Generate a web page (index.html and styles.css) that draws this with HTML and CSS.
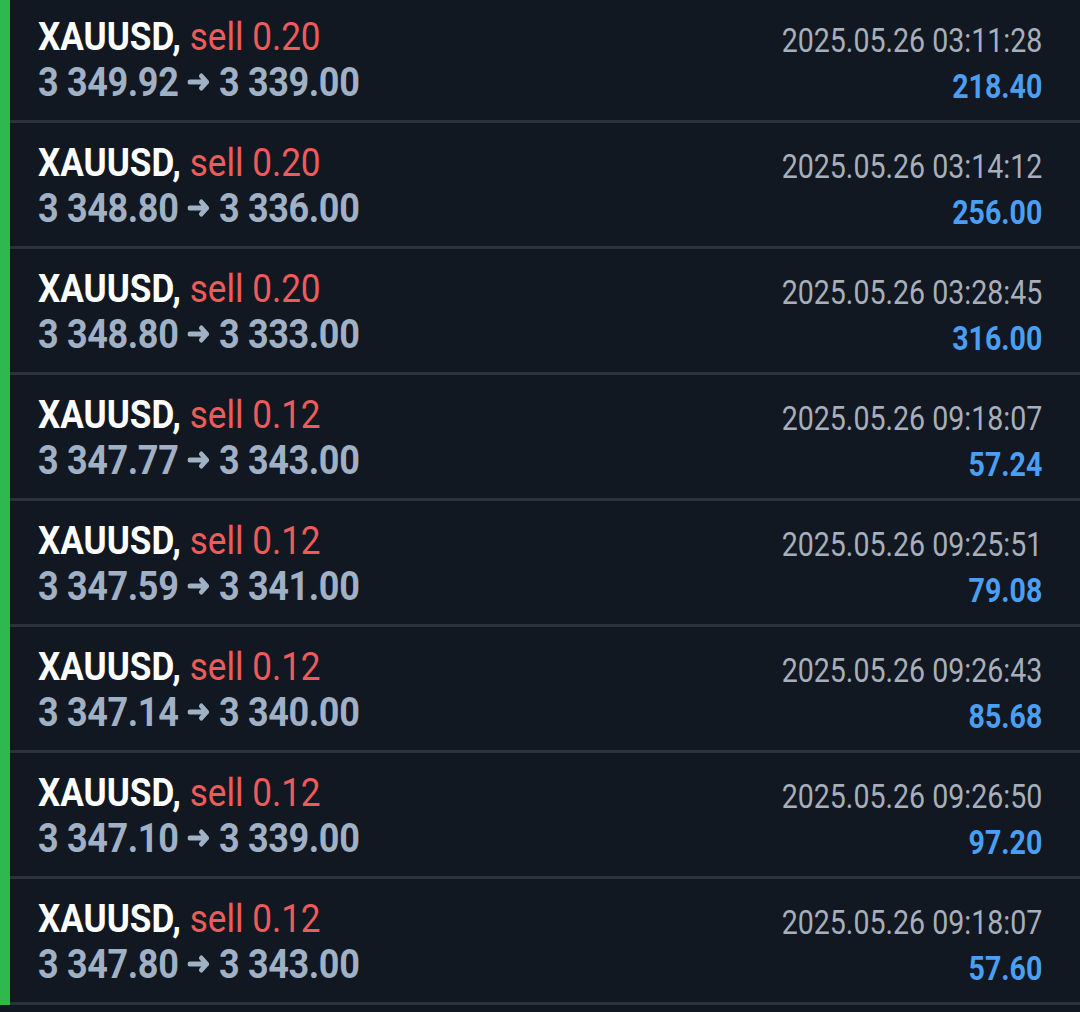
FILE: index.html
```html
<!DOCTYPE html>
<html lang="en">
<head>
  <meta charset="UTF-8">
  <meta name="viewport" content="width=device-width, initial-scale=1.0">
  <title>Trade History</title>
  <link rel="stylesheet" href="styles.css">
</head>
<body>

  <div class="history">

    <div class="deal">
      <div class="deal-left">
        <div class="deal-title"><b>XAUUSD,</b> <span class="sell">sell 0.20</span></div>
        <div class="deal-price">3 349.92 <svg class="arrow" viewBox="0 0 26 18"><path d="M2.5 9h19M15.5 3l6 6-6 6"/></svg> 3 339.00</div>
      </div>
      <div class="deal-right">
        <div class="deal-time">2025.05.26 03:11:28</div>
        <div class="deal-profit">218.40</div>
      </div>
    </div>

    <div class="deal">
      <div class="deal-left">
        <div class="deal-title"><b>XAUUSD,</b> <span class="sell">sell 0.20</span></div>
        <div class="deal-price">3 348.80 <svg class="arrow" viewBox="0 0 26 18"><path d="M2.5 9h19M15.5 3l6 6-6 6"/></svg> 3 336.00</div>
      </div>
      <div class="deal-right">
        <div class="deal-time">2025.05.26 03:14:12</div>
        <div class="deal-profit">256.00</div>
      </div>
    </div>

    <div class="deal">
      <div class="deal-left">
        <div class="deal-title"><b>XAUUSD,</b> <span class="sell">sell 0.20</span></div>
        <div class="deal-price">3 348.80 <svg class="arrow" viewBox="0 0 26 18"><path d="M2.5 9h19M15.5 3l6 6-6 6"/></svg> 3 333.00</div>
      </div>
      <div class="deal-right">
        <div class="deal-time">2025.05.26 03:28:45</div>
        <div class="deal-profit">316.00</div>
      </div>
    </div>

    <div class="deal">
      <div class="deal-left">
        <div class="deal-title"><b>XAUUSD,</b> <span class="sell">sell 0.12</span></div>
        <div class="deal-price">3 347.77 <svg class="arrow" viewBox="0 0 26 18"><path d="M2.5 9h19M15.5 3l6 6-6 6"/></svg> 3 343.00</div>
      </div>
      <div class="deal-right">
        <div class="deal-time">2025.05.26 09:18:07</div>
        <div class="deal-profit">57.24</div>
      </div>
    </div>

    <div class="deal">
      <div class="deal-left">
        <div class="deal-title"><b>XAUUSD,</b> <span class="sell">sell 0.12</span></div>
        <div class="deal-price">3 347.59 <svg class="arrow" viewBox="0 0 26 18"><path d="M2.5 9h19M15.5 3l6 6-6 6"/></svg> 3 341.00</div>
      </div>
      <div class="deal-right">
        <div class="deal-time">2025.05.26 09:25:51</div>
        <div class="deal-profit">79.08</div>
      </div>
    </div>

    <div class="deal">
      <div class="deal-left">
        <div class="deal-title"><b>XAUUSD,</b> <span class="sell">sell 0.12</span></div>
        <div class="deal-price">3 347.14 <svg class="arrow" viewBox="0 0 26 18"><path d="M2.5 9h19M15.5 3l6 6-6 6"/></svg> 3 340.00</div>
      </div>
      <div class="deal-right">
        <div class="deal-time">2025.05.26 09:26:43</div>
        <div class="deal-profit">85.68</div>
      </div>
    </div>

    <div class="deal">
      <div class="deal-left">
        <div class="deal-title"><b>XAUUSD,</b> <span class="sell">sell 0.12</span></div>
        <div class="deal-price">3 347.10 <svg class="arrow" viewBox="0 0 26 18"><path d="M2.5 9h19M15.5 3l6 6-6 6"/></svg> 3 339.00</div>
      </div>
      <div class="deal-right">
        <div class="deal-time">2025.05.26 09:26:50</div>
        <div class="deal-profit">97.20</div>
      </div>
    </div>

    <div class="deal">
      <div class="deal-left">
        <div class="deal-title"><b>XAUUSD,</b> <span class="sell">sell 0.12</span></div>
        <div class="deal-price">3 347.80 <svg class="arrow" viewBox="0 0 26 18"><path d="M2.5 9h19M15.5 3l6 6-6 6"/></svg> 3 343.00</div>
      </div>
      <div class="deal-right">
        <div class="deal-time">2025.05.26 09:18:07</div>
        <div class="deal-profit">57.60</div>
      </div>
    </div>

  </div>

</body>
</html>
```

FILE: styles.css
```css
/* Page Background */
body {
  font-family: 'Roboto', 'Liberation Sans', sans-serif;
  background: #121821;
  margin: 0;
  padding: 0;
  height: 1012px;
  overflow: hidden;
}
/* History list with the green marker on the left */
.history {
  margin-top: -3px;
  border-left: 10px solid #2fb84b;
}
.deal {
  display: flex;
  justify-content: space-between;
  height: 126px;
  box-sizing: border-box;
  padding: 17px 38px 0 28px;
  border-bottom: 3px solid #2b323c;
}
.deal-left {
  transform: scaleX(0.9);
  transform-origin: left top;
  white-space: nowrap;
}
.deal-right {
  padding-top: 3px;
  text-align: right;
  transform: scaleX(0.84);
  transform-origin: right top;
  white-space: nowrap;
}
.deal-title {
  font-size: 39px;
  line-height: 46px;
  color: #ffffff;
}
.deal-title b {
  font-weight: bold;
}
.sell {
  color: #ee5b5b;
}
.deal-price {
  font-size: 40px;
  line-height: 46px;
  font-weight: bold;
  letter-spacing: -0.4px;
  color: #a0b0c5;
}
/* heavy right arrow between open and close price */
.arrow {
  width: 26px;
  height: 18px;
  vertical-align: 5px;
  fill: none;
  stroke: #a0b0c5;
  stroke-width: 5;
  stroke-linecap: round;
  stroke-linejoin: round;
}
.deal-time {
  font-size: 34px;
  line-height: 46px;
  color: #a6afbb;
}
.deal-profit {
  font-size: 34px;
  line-height: 46px;
  font-weight: bold;
  color: #4b9ff3;
}
```
